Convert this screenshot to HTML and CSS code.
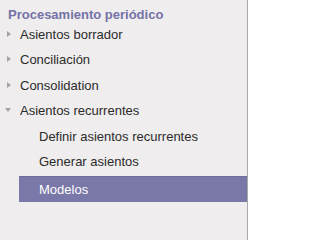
FILE: index.html
```html
<!DOCTYPE html>
<html>
<head>
<meta charset="utf-8">
<link rel="stylesheet" href="styles.css">
</head>
<body>
<div class="layout">
  <nav class="sidebar">
    <div class="title">Procesamiento periódico</div>
    <ul class="menu">
      <li class="item"><span class="arrow right"></span>Asientos borrador</li>
      <li class="item"><span class="arrow right"></span>Conciliación</li>
      <li class="item"><span class="arrow right"></span>Consolidation</li>
      <li class="item"><span class="arrow down"></span>Asientos recurrentes</li>
      <li class="item sub">Definir asientos recurrentes</li>
      <li class="item sub">Generar asientos</li>
      <li class="item sub active">Modelos</li>
    </ul>
  </nav>
  <main class="content"></main>
</div>
</body>
</html>
```
FILE: styles.css
```css
html, body {
  margin: 0;
  padding: 0;
  height: 100%;
  background: #ffffff;
}
.layout {
  display: flex;
  min-height: 100vh;
}
.sidebar {
  width: 247px;
  background: #efeded;
  border-right: 1px solid #a8a8a8;
  font-family: "Liberation Sans", Arial, sans-serif;
  font-size: 13px;
  color: #2b2b2b;
  box-sizing: content-box;
}
.content {
  flex: 1;
  background: #ffffff;
}
.title {
  margin-top: 7px;
  padding-left: 8px;
  line-height: 16px;
  height: 16px;
  font-weight: bold;
  color: #7572a8;
  white-space: nowrap;
}
.menu {
  list-style: none;
  margin: 0;
  padding: 0;
}
.item {
  display: flex;
  align-items: center;
  height: 24px;
  line-height: 24px;
  padding-bottom: 1.45px;
  padding-left: 7px;
  white-space: nowrap;
}
.arrow {
  width: 13px;
  height: 8px;
  position: relative;
  flex: none;
}
.arrow.right::before {
  content: "";
  position: absolute;
  left: 0;
  top: 0;
  border-left: 4px solid #a3a3a3;
  border-top: 3.5px solid transparent;
  border-bottom: 3.5px solid transparent;
}
.arrow.down::before {
  content: "";
  position: absolute;
  left: -2px;
  top: 1px;
  border-top: 4px solid #a3a3a3;
  border-left: 3.5px solid transparent;
  border-right: 3.5px solid transparent;
}
.sub {
  padding-left: 39px;
}
.active {
  margin-left: 19px;
  padding-left: 20px;
  background: #7a78a9;
  color: #ffffff;
  border-top: 1px solid #6f6d9e;
  height: 25px;
  line-height: 25px;
  padding-bottom: 0;
}
```
